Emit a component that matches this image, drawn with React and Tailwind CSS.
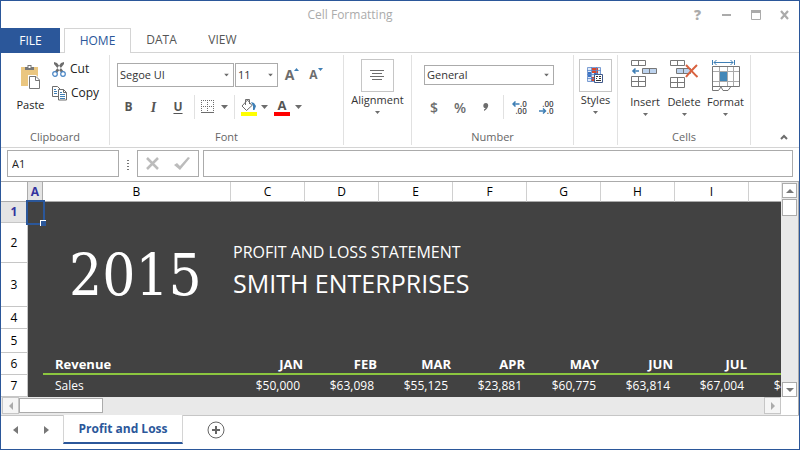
import React from "react";

function Caret({ className = "" }) {
  return (
    <svg className={className} width="7" height="4" viewBox="0 0 7 4" aria-hidden="true">
      <path d="M0 0h7L3.5 4z" fill="#6d6d6d" />
    </svg>
  );
}

function SmallCaret({ className = "" }) {
  return (
    <svg className={className} width="5" height="3" viewBox="0 0 5 3" aria-hidden="true">
      <path d="M0 0h5L2.5 3z" fill="#6d6d6d" />
    </svg>
  );
}

function Group({ label, className = "", children }) {
  return (
    <section
      aria-label={label}
      className={`flex flex-col border-r border-[#e1e1e1] ${className}`}
    >
      <div className="flex-1">{children}</div>
      {label && <div className="text-center text-[11px] leading-4 text-[#666]">{label}</div>}
    </section>
  );
}

function Combo({ label, options, className = "" }) {
  return (
    <div className={`relative ${className}`}>
      <select
        aria-label={label}
        className="block h-full w-full appearance-none border border-[#ababab] bg-white px-[2px] text-[11px] text-[#333] outline-none"
      >
        {options.map((o) => (
          <option key={o}>{o}</option>
        ))}
      </select>
      <SmallCaret className="pointer-events-none absolute top-1/2 right-[5px] -translate-y-1/2" />
    </div>
  );
}

function TitleBar() {
  return (
    <header className="flex h-[27px] items-center text-[#ababab]">
      <h1 className="flex-1 pl-4 text-center text-[12px]">Cell Formatting</h1>
      <div className="flex w-[116px] items-center">
        <button aria-label="Help" className="flex h-6 w-[29px] items-center justify-center text-[14px] font-extrabold">?</button>
        <button aria-label="Minimize" className="flex h-6 w-[29px] items-center justify-center">
          <svg width="10" height="10"><path d="M0 4h9v2H0z" fill="#ababab" /></svg>
        </button>
        <button aria-label="Maximize" className="flex h-6 w-[29px] items-center justify-center">
          <svg width="10" height="10"><path d="M.5 1h9v8.5h-9z" fill="none" stroke="#ababab" /><path d="M0 0h10v3H0z" fill="#ababab" /></svg>
        </button>
        <button aria-label="Close" className="flex h-6 w-[29px] items-center justify-center">
          <svg width="10" height="10"><path d="M1 1l7 8M8 1L1 9" stroke="#ababab" strokeWidth="2.2" /></svg>
        </button>
      </div>
    </header>
  );
}

function RibbonTabs() {
  return (
    <nav className="flex h-[25px] text-[12px]">
      <button className="w-[59px] bg-[#2b579a] text-white">FILE</button>
      <span className="w-[4px] border-b border-[#d4d4d4]" />
      <button className="w-[67px] border-x border-t border-[#d4d4d4] text-[#2b579a]">HOME</button>
      <button className="w-[61px] border-b border-[#d4d4d4] text-[#555]">DATA</button>
      <button className="w-[61px] border-b border-[#d4d4d4] text-[#555]">VIEW</button>
      <span className="flex-1 border-b border-[#d4d4d4]" />
    </nav>
  );
}

function PasteIcon() {
  return (
    <svg width="20" height="24" viewBox="0 0 20 24">
      <path d="M0 2h17v19H0z" fill="#eac680" />
      <path d="M4 0h9v5H4z" fill="#fff" />
      <path d="M4 2h2.5V0h4v2H13v3H4z" fill="#777" />
      <path d="M7.5 1h2v2h-2z" fill="#fff" />
      <path d="M7 10h8l5 5v9H7z" fill="#fff" />
      <path d="M8.500 11.500h6.500l3.500 3.500v8.500h-10zM14.500 11.500v4h4" fill="#fff" stroke="#777" />
    </svg>
  );
}

function CutIcon() {
  return (
    <svg width="14" height="15" viewBox="0 0 14 15">
      <path d="M2 0l3 1 7 9-2.500 1L2 2zM12 0L9 1 2.500 10l2.500 1 7-9z" fill="#6d6d6d" />
      <circle cx="3" cy="12" r="2.300" fill="#fff" stroke="#4a86c5" strokeWidth="1.200" />
      <circle cx="11" cy="12" r="2.300" fill="#fff" stroke="#4a86c5" strokeWidth="1.200" />
    </svg>
  );
}

function CopyIcon() {
  return (
    <svg width="15" height="15" viewBox="0 0 15 15">
      <path d="M.5.500h5L8 3v7.500H.500z" fill="#fff" stroke="#6d6d6d" />
      <path d="M2 3.500h2M2 5.500h3M2 7.500h3" stroke="#3f7fb5" />
      <path d="M6.500 3.500h5l3 3v7.500h-8zM11.500 3.500v3h3" fill="#fff" stroke="#6d6d6d" />
      <path d="M8 6.500h2M8 8.500h5M8 10.500h5M8 12.500h5" stroke="#3f7fb5" />
    </svg>
  );
}

function FontSizeIcon({ up }) {
  return (
    <span className="flex items-center text-[#6d6d6d]">
      <span className={up ? "text-[14px] leading-4 font-bold" : "text-[12px] leading-4 font-bold"}>A</span>
      <svg className="mb-[11px]" width="5" height="3" viewBox="0 0 5 3">
        <path d={up ? "M0 3h5L2.500 0z" : "M0 0h5L2.500 3z"} fill="#3f7fb5" />
      </svg>
    </span>
  );
}

function FontGroup() {
  return (
    <Group label="Font" className="w-[234px]">
      <div className="mt-2 flex h-[24px] pl-[7px]">
        <Combo label="Font name" options={["Segoe UI"]} className="w-[117px]" />
        <Combo label="Font size" options={["11"]} className="ml-px w-[43px]" />
        <button aria-label="Increase font size" className="ml-[2px] flex w-6 items-center justify-center"><FontSizeIcon up /></button>
        <button aria-label="Decrease font size" className="flex w-6 items-center justify-center"><FontSizeIcon /></button>
      </div>
      <div className="mt-2 flex h-[24px] items-center pl-[6px] text-[12px] font-bold text-[#555]">
        <button aria-label="Bold" className="w-[25px]">B</button>
        <button aria-label="Italic" className="w-[25px] italic font-[Liberation_Serif,serif] text-[14px]">I</button>
        <button aria-label="Underline" className="w-[24px] underline underline-offset-2">U</button>
        <span className="ml-1 h-full w-px bg-[#e1e1e1]" />
        <button aria-label="Borders" className="ml-[6px] flex items-center gap-[6px]">
          <svg width="14" height="14" viewBox="0 0 14 14" stroke="#6d6d6d" fill="none">
            <path d="M.500 0v12M6.500 0v12M12.500 0v12M0 .500h13M0 6.500h13" strokeDasharray="1 1" />
            <path d="M0 12.500h13" />
          </svg>
          <Caret />
        </button>
        <span className="ml-[6px] h-full w-px bg-[#e1e1e1]" />
        <button aria-label="Fill color" className="ml-[5px] flex items-center gap-1">
          <svg width="17" height="18" viewBox="0 0 17 18">
            <path d="M7.500 2L12 7.500 6.500 12.500 2 8z" fill="#fff" stroke="#6d6d6d" />
            <path d="M5.500 7V1.500h4V6" fill="none" stroke="#6d6d6d" />
            <path d="M11 4l3 1 2 3-1.500 4H13V8z" fill="#3f7fb5" />
            <path d="M1 14h16v4H1z" fill="#ff0" />
          </svg>
          <Caret />
        </button>
        <button aria-label="Font color" className="ml-[6px] flex items-center gap-[5px]">
          <span className="flex w-4 flex-col items-center border-b-4 border-[#f00] text-[13px] leading-[14px]">A</span>
          <Caret />
        </button>
      </div>
    </Group>
  );
}

function DecimalIcon({ dir }) {
  return (
    <span className="flex flex-col items-end text-[8px] leading-[7px] text-[#444]">
      <span className="flex items-center">
        {dir === "left" && <ArrowIcon flip />}
        {dir === "left" ? ".0" : ".00"}
      </span>
      <span className="flex items-center">
        {dir === "right" && <ArrowIcon />}
        {dir === "right" ? ".0" : ".00"}
      </span>
    </span>
  );
}

function ArrowIcon({ flip }) {
  return (
    <svg width="8" height="6" viewBox="0 0 8 6" fill="none" stroke="#3f7fb5" strokeWidth="1.500">
      <path d={flip ? "M7.500 3H1M3.500.500L1 3l2.500 2.500" : "M0 3h6.500M4 .500L6.500 3 4 5.500"} />
    </svg>
  );
}

function NumberGroup() {
  return (
    <Group label="Number" className="w-[162px]">
      <Combo label="Number format" options={["General"]} className="mt-[10px] ml-3 h-5 w-[130px]" />
      <div className="mt-[10px] flex h-[24px] items-center pl-[9px] text-[14px] font-semibold text-[#6d6d6d]">
        <button aria-label="Currency" className="w-[26px]">$</button>
        <button aria-label="Percent" className="w-[26px]">%</button>
        <button aria-label="Comma style" className="flex w-[26px] justify-center">
          <svg width="6" height="8" viewBox="0 0 6 8"><path d="M3 0c3 0 3.500 5-2 8V6.500C2 6 2.500 5.500 2.500 5-.5 5-.5 0 3 0z" fill="#6d6d6d" /></svg>
        </button>
        <span className="ml-1 h-full w-px bg-[#e1e1e1]" />
        <button aria-label="Increase decimals" className="ml-2"><DecimalIcon dir="left" /></button>
        <button aria-label="Decrease decimals" className="ml-3"><DecimalIcon dir="right" /></button>
      </div>
    </Group>
  );
}

function StylesIcon() {
  return (
    <svg width="18" height="18" viewBox="0 0 18 18">
      <path d="M1 1h13v14H1z" fill="#dce8f8" />
      <path d="M5 1h6v5H5zM4 10h4v4H4z" fill="#d9482b" />
      <path d="M1 5h3v5H1zM7 6h4v3H7z" fill="#3b73c4" />
      <path d="M.500.500h13v14H.500zM4.500 0v15M9.500 0v15M0 3.500h14M0 7.500h14M0 11.500h14" fill="none" stroke="#5d86c8" strokeWidth=".8" />
      <path d="M7.500 7.500h8v8h-8z" fill="#fff" stroke="#40598a" />
      <path d="M9 9.500h2M12 9.500h2M9 11.500h1M12 11.500h2M9 13.500h5" stroke="#333" />
    </svg>
  );
}

function InsertIcon() {
  return (
    <svg width="28" height="30" viewBox="0 0 28 30" fill="none" stroke="#777">
      <path d="M.500.500h14v5H.500zM7.500.500v5M.500 16.500h14v10H.500zM7.500 16.500v10M.500 21.500h14" />
      <path d="M11.500 8.500h14v5h-14zM18.500 8.500v5" fill="#bdd3ee" />
      <path d="M8 11H2M4.500 8.500L2 11l2.500 2.500" stroke="#3f7fb5" strokeWidth="1.600" />
    </svg>
  );
}

function DeleteIcon() {
  return (
    <svg width="28" height="30" viewBox="0 0 28 30" fill="none" stroke="#777">
      <path d="M.500.500h14v5H.500zM7.500.500v5M.500 17.500h14v10H.500zM7.500 17.500v10M.500 22.500h14" />
      <path d="M6.500 8.500h14v5h-14zM13.500 8.500v5" fill="#bdd3ee" />
      <path d="M16 5c3 3 7 8 11.500 12M27 5c-4 4-8 8-11 12" stroke="#d9623f" strokeWidth="2" />
    </svg>
  );
}

function FormatIcon() {
  return (
    <svg width="28" height="32" viewBox="0 0 28 32" fill="none" stroke="#777">
      <path d="M.500 0v5M22.500 0v5M2 2.500h19M4.500 0L2 2.500 4.500 5M18.500 0L21 2.500 18.500 5" stroke="#3f7fb5" />
      <path d="M.500 6.500h27v20H.500z" />
      <path d="M1 11.500h26M1 21.500h26M7.500 7v19M15.500 7v19M21.500 7v19" stroke="#aaa" />
      <path d="M8 12h7v9H8z" fill="#4488b8" stroke="none" />
      <path d="M.500 26v4.500h6L9 27l2 3.500h5l3-4" />
    </svg>
  );
}

function LargeButton({ icon, label, className = "" }) {
  return (
    <button className={`flex flex-col items-center text-[11px] text-[#333] ${className}`}>
      <span className="flex h-[34px] items-start justify-center">{icon}</span>
      <span className="leading-4">{label}</span>
      <SmallCaret className="mt-[3px]" />
    </button>
  );
}

function FramedButton({ icon, label }) {
  return (
    <button className="mx-auto mt-1 flex flex-col items-center text-[11px] text-[#333]">
      <span className="flex h-[33px] w-[33px] items-center justify-center border border-[#c6c6c6]">{icon}</span>
      <span className="leading-4">{label}</span>
      <SmallCaret className="mt-[3px]" />
    </button>
  );
}

function Ribbon() {
  return (
    <div className="flex h-[95px] items-stretch border-b border-[#d4d4d4] pt-[2px] pb-[2px]">
      <Group label="Clipboard" className="w-[109px]">
        <div className="flex pl-[14px]">
          <button className="mt-[10px] flex w-[31px] flex-col items-center text-[11px] text-[#222]">
            <PasteIcon />
            <span className="mt-2 leading-4">Paste</span>
          </button>
          <div className="mt-[2px] ml-[6px] text-[12px] text-[#222]">
            <button className="flex h-6 items-center gap-1"><CutIcon />Cut</button>
            <button className="flex h-6 items-center gap-1"><CopyIcon />Copy</button>
          </div>
        </div>
      </Group>
      <FontGroup />
      <Group className="w-[68px]">
        <div className="flex">
          <FramedButton
            label="Alignment"
            icon={<svg width="14" height="11"><path d="M0 .500h14M2 3.500h10M0 6.500h14M2 9.500h10" stroke="#6d6d6d" /></svg>}
          />
        </div>
      </Group>
      <NumberGroup />
      <Group className="w-[44px]">
        <div className="flex"><FramedButton label="Styles" icon={<StylesIcon />} /></div>
      </Group>
      <Group label="Cells" className="w-[133px]">
        <div className="flex pt-[5px] pl-2">
          <LargeButton className="w-[38px]" icon={<InsertIcon />} label="Insert" />
          <LargeButton className="w-[40px]" icon={<DeleteIcon />} label="Delete" />
          <LargeButton className="w-[43px]" icon={<FormatIcon />} label="Format" />
        </div>
      </Group>
      <div className="flex flex-1 items-end justify-end pr-[11px] pb-[5px]">
        <button aria-label="Collapse ribbon">
          <svg className="block" width="8" height="6" fill="none"><path d="M1 5l3-3 3 3" stroke="#6d6d6d" strokeWidth="2" /></svg>
        </button>
      </div>
    </div>
  );
}

function FormulaBar() {
  return (
    <div className="flex h-[33px] items-start px-[6px] pt-[2px]">
      <input aria-label="Name box" defaultValue="A1" className="h-[27px] w-[112px] border border-[#ababab] px-1 text-[11px] text-[#222] outline-none" />
      <svg className="mt-[10px] ml-2" width="2" height="10"><path d="M1 0v10" stroke="#777" strokeWidth="2" strokeDasharray="1 2" /></svg>
      <div className="ml-2 flex h-[27px] w-[62px] items-center border border-[#ababab]">
        <button aria-label="Cancel" className="flex w-[29px] justify-center">
          <svg width="13" height="13"><path d="M1 1l11 11M12 1L1 12" stroke="#bcbcbc" strokeWidth="2.500" /></svg>
        </button>
        <button aria-label="Enter" className="flex w-[29px] justify-center">
          <svg width="16" height="13"><path d="M0 8l3-2 3 3 8-9 2 1L6 13z" fill="#bcbcbc" /></svg>
        </button>
      </div>
      <input aria-label="Formula" className="ml-1 h-[27px] min-w-0 flex-1 border border-[#ababab] px-1 text-[11px] outline-none" />
    </div>
  );
}

const COLUMNS = ["C", "D", "E", "F", "G", "H", "I", "J"];
const MONTHS = ["JAN", "FEB", "MAR", "APR", "MAY", "JUN", "JUL", "AUG"];
const SALES = ["$50,000", "$63,098", "$55,125", "$23,881", "$60,775", "$63,814", "$67,004", "$45,210"];

function RowHeader({ n, active }) {
  return (
    <th
      scope="row"
      className={`border-r border-b border-[#c6c6c6] p-0 text-[12px] ${active ? "bg-[#e4e4e4] font-bold text-[#33339f]" : "bg-white font-normal text-black"}`}
    >
      {n}
    </th>
  );
}

function SheetTable() {
  return (
    <table className="w-[822px] table-fixed border-separate border-spacing-0 bg-[#424242] text-[12px] leading-4 text-white">
      <colgroup>
        <col className="w-[27px]" />
        <col className="w-[15px]" />
        <col className="w-[188px]" />
        {COLUMNS.map((c) => <col key={c} className="w-[74px]" />)}
      </colgroup>
      <thead>
        <tr className="h-[20px] bg-white text-black">
          <th aria-label="Select all" className="border-r border-b border-[#ababab] p-0" />
          <th className="border-r border-b border-[#ababab] bg-[#e4e4e4] p-0 text-[#33339f]">A</th>
          <th className="border-r border-b border-r-[#d0d0d0] border-b-[#ababab] p-0 font-normal">B</th>
          {COLUMNS.map((c) => (
            <th key={c} className="border-r border-b border-r-[#d0d0d0] border-b-[#ababab] p-0 font-normal">{c}</th>
          ))}
        </tr>
      </thead>
      <tbody>
        <tr className="h-[21px]">
          <RowHeader n="1" active />
          <td className="relative p-0">
            <span className="absolute -top-[2px] -right-[2px] -bottom-[2px] -left-[2px] border-2 border-[#2b579a]" />
            <span className="absolute -right-[3px] -bottom-[3px] h-[6px] w-[6px] border-t border-l border-white bg-[#2b579a]" />
          </td>
          <td colSpan={9} />
        </tr>
        <tr className="h-[40px]">
          <RowHeader n="2" />
          <td />
          <td rowSpan={2} className="p-0 pt-5 pl-[26px] font-['DejaVu_Serif_Condensed','DejaVu_Serif',serif] text-[58px] leading-[60px]">2015</td>
          <td colSpan={8} className="px-[2px] pt-0 pb-[2px] align-bottom text-[16px] leading-[18px]">PROFIT AND LOSS STATEMENT</td>
        </tr>
        <tr className="h-[44px]">
          <RowHeader n="3" />
          <td />
          <td colSpan={8} className="px-[2px] pt-0 pb-1 align-middle text-[25px] leading-8">SMITH ENTERPRISES</td>
        </tr>
        <tr className="h-[22px]"><RowHeader n="4" /><td colSpan={10} /></tr>
        <tr className="h-[24px]"><RowHeader n="5" /><td colSpan={10} /></tr>
        <tr className="h-[22px] text-[13px] font-bold">
          <RowHeader n="6" />
          <td />
          <td className="border-b-2 border-[#8cc63f] pt-[2px] pr-0 pb-0 pl-3">Revenue</td>
          {MONTHS.map((m) => <td key={m} className="border-b-2 border-[#8cc63f] pt-[2px] pr-[2px] pb-0 pl-0 text-right">{m}</td>)}
        </tr>
        <tr className="h-[22px]">
          <RowHeader n="7" />
          <td />
          <td className="py-0 pr-0 pl-3">Sales</td>
          {SALES.map((s) => <td key={s} className="py-0 pr-[5px] pl-0 text-right">{s}</td>)}
        </tr>
      </tbody>
    </table>
  );
}

function ScrollButton({ label, d, disabled, className }) {
  return (
    <button aria-label={label} className={`flex items-center justify-center border ${disabled ? "border-[#c6c6c6] bg-[#f5f5f5] text-[#ababab]" : "border-[#ababab] bg-white text-[#777]"} ${className}`}>
      <svg width="8" height="8" viewBox="0 0 8 8"><path d={d} fill="currentColor" /></svg>
    </button>
  );
}

function Sheet() {
  return (
    <main className="border-t border-r border-[#ababab]">
      <div className="flex">
        <div className="min-w-0 flex-1 overflow-hidden bg-[#424242]"><SheetTable /></div>
        <div className="flex w-[17px] flex-col items-center bg-[#e9e9e9] pt-px">
          <ScrollButton label="Scroll up" d="M0 6h8L4 2z" className="h-[15px] w-[15px]" />
          <div className="mt-px h-[17px] w-[15px] border border-[#ababab] bg-white" />
          <div className="flex-1" />
          <ScrollButton label="Scroll down" d="M0 2h8L4 6z" className="h-[15px] w-[15px]" />
        </div>
      </div>
      <div className="flex h-[18px]">
        <div className="flex flex-1 bg-[#e9e9e9] pl-px">
          <ScrollButton disabled label="Scroll left" d="M6 0v8L2 4z" className="h-[17px] w-[17px]" />
          <div className="mt-[1px] h-[15px] w-[84px] border border-[#ababab] bg-white" />
          <div className="flex-1" />
          <ScrollButton disabled label="Scroll right" d="M2 0v8l4-4z" className="h-[17px] w-[17px]" />
        </div>
        <div className="w-[17px]" />
      </div>
    </main>
  );
}

function SheetTabs() {
  return (
    <footer className="flex h-[34px] pb-[5px]">
      <div className="flex w-[62px] items-center border-t border-[#c6c6c6] pl-[11px] text-[#777]">
        <button aria-label="Previous sheet"><svg className="block" width="6" height="8"><path d="M6 0v8L1 4z" fill="currentColor" /></svg></button>
        <button aria-label="Next sheet" className="ml-[26px]"><svg className="block" width="6" height="8"><path d="M0 0v8l5-4z" fill="currentColor" /></svg></button>
      </div>
      <button className="w-[120px] border-x border-b-2 border-x-[#d4d4d4] border-b-[#2b579a] text-[12px] font-bold text-[#2b579a]">Profit and Loss</button>
      <div className="flex flex-1 items-center border-t border-[#c6c6c6] pl-6">
        <button aria-label="New sheet">
          <svg className="block" width="18" height="18" fill="none" stroke="#666"><circle cx="9" cy="9" r="8" /><path d="M9 5v8M5 9h8" strokeWidth="2" /></svg>
        </button>
      </div>
    </footer>
  );
}

export default function App() {
  return (
    <div className="flex min-h-screen w-full flex-col border border-[#2b579a] bg-white font-['Open_Sans','Noto_Sans',sans-serif]">
      <TitleBar />
      <RibbonTabs />
      <Ribbon />
      <FormulaBar />
      <Sheet />
      <SheetTabs />
    </div>
  );
}
